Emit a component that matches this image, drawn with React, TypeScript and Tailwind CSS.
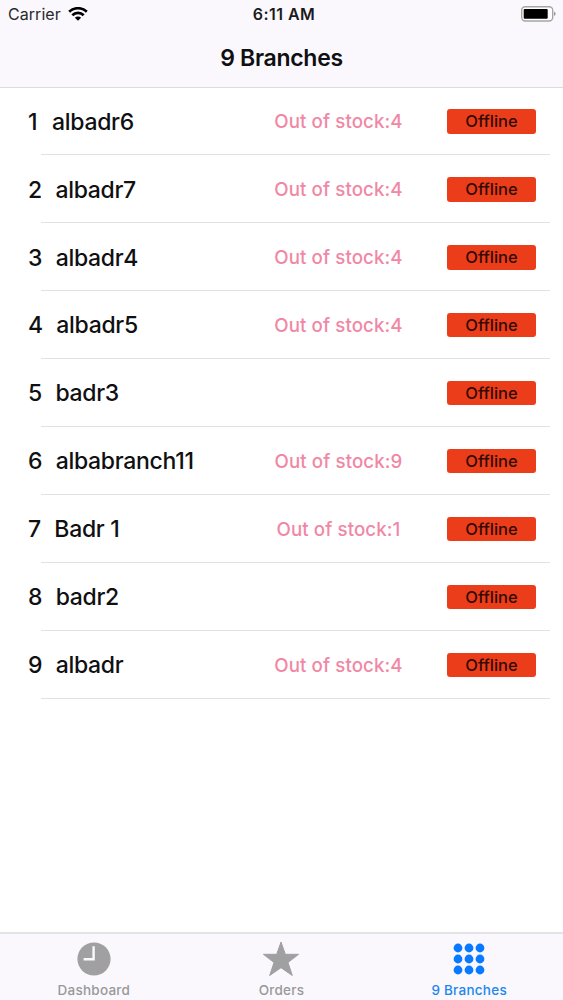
import React from 'react';

interface Branch {
  name: string;
  outOfStock?: number;
}

const branches: Branch[] = [
  { name: 'albadr6', outOfStock: 4 },
  { name: 'albadr7', outOfStock: 4 },
  { name: 'albadr4', outOfStock: 4 },
  { name: 'albadr5', outOfStock: 4 },
  { name: 'badr3' },
  { name: 'albabranch11', outOfStock: 9 },
  { name: 'Badr 1', outOfStock: 1 },
  { name: 'badr2' },
  { name: 'albadr', outOfStock: 4 },
];

const StatusBar: React.FC = () => (
  <div className="grid h-[28px] grid-cols-3 items-center pl-[8px] pr-[7px] text-[16px] leading-[28px]">
    <div className="flex items-center gap-[7px] text-[#29292b]">
      <span className="tracking-[0.05px]">Carrier</span>
      <svg width="20" height="14" viewBox="0 0 20 14" fill="none" stroke="#000" strokeWidth="2.7">
        <path d="M1.2 4.8a12.6 12.6 0 0 1 17.6 0" />
        <path d="M4.3 8.3a8.1 8.1 0 0 1 11.4 0" />
        <path d="M10 13.8 6.9 10.8a4.4 4.4 0 0 1 6.2 0Z" fill="#000" stroke="none" />
      </svg>
    </div>
    <span className="pl-[4px] text-center font-semibold tracking-[0.45px] text-[#1b1b1d]">6:11 AM</span>
    <svg className="justify-self-end" width="36" height="16" viewBox="0 0 36 16">
      <rect x="1.7" y="0.7" width="31" height="14.3" rx="3.5" fill="#fff" stroke="#a5a5a7" strokeWidth="1.4" />
      <rect x="3.7" y="2.9" width="24" height="9.9" rx="1" fill="#000" />
      <path d="M34.2 5.6c1.8.8 1.8 3.7 0 4.5Z" fill="#858587" />
    </svg>
  </div>
);

const BranchRow: React.FC<{ branch: Branch; index: number }> = ({ branch, index }) => (
  <li className="h-[67.95px] pl-[28px] pr-[13px]">
    <div className="flex h-full items-center">
      <div className="flex w-[220px] shrink-0 gap-[13.5px] pt-[0.6px] text-[23px] font-medium leading-[28px] tracking-[-0.3px] text-[#101012]">
        <span className="min-w-[10.5px]">{index}</span>
        <span>{branch.name}</span>
      </div>
      <span className="w-[181px] shrink-0 pt-[1.4px] text-center text-[18.7px] font-medium tracking-[0.1px] text-[#f088a5]">
        {branch.outOfStock !== undefined && `Out of stock:${branch.outOfStock}`}
      </span>
      <span className="ml-[18px] h-[24.5px] w-[89px] shrink-0 rounded-[3px] bg-[#ec3d1b] text-center text-[16.5px] font-medium leading-[24px] text-[#310b04]">
        Offline
      </span>
    </div>
    <div className="ml-[13px] mt-[-1px] h-px bg-[#e2e2e4]" />
  </li>
);

const ClockIcon = () => (
  <svg width="34" height="34" viewBox="0 0 34 34">
    <circle cx="17" cy="17" r="16.6" fill="#a0a0a2" />
    <path d="M16.6 4.2v13.1H6.6" fill="none" stroke="#faf8fc" strokeWidth="2.4" />
  </svg>
);

const StarIcon = () => (
  <svg width="38" height="36" viewBox="0 0 38 36" fill="#a0a0a2">
    <path
      d="m19 1 4.3 12.3h13.3L26 21.5l4.3 13L19 26.7 7.7 34.5l4.3-13L1.4 13.3h13.3Z"
      stroke="#a0a0a2"
      strokeLinejoin="round"
    />
  </svg>
);

const GridIcon = () => (
  <svg width="32" height="32" viewBox="0 0 32 32" fill="#087aff">
    {[5, 16, 27].map((y) =>
      [5, 16, 27].map((x) => <circle key={`${x}-${y}`} cx={x} cy={y} r="4.4" />)
    )}
  </svg>
);

const tabs = [
  { label: 'Dashboard', icon: <ClockIcon />, color: 'text-[#98989a]' },
  { label: 'Orders', icon: <StarIcon />, color: 'text-[#98989a]' },
  { label: '9 Branches', icon: <GridIcon />, color: 'text-[#2187ee]' },
];

const App: React.FC = () => {
  return (
    <div className="flex h-[1000px] w-[563px] flex-col bg-white font-['Inter',sans-serif]">
      <header className="h-[88px] shrink-0 border-b border-[#dcdcde] bg-[#faf8fc]">
        <StatusBar />
        <h1 className="mt-[16px] text-center text-[23px] font-semibold leading-[28px] tracking-[-0.3px] text-[#101012]">
          9 Branches
        </h1>
      </header>

      <ul className="mt-[-0.6px] flex-1">
        {branches.map((branch, i) => (
          <BranchRow key={branch.name} branch={branch} index={i + 1} />
        ))}
      </ul>

      <nav className="grid h-[68px] shrink-0 grid-cols-3 border-t-2 border-[#e3e2e6] bg-[#faf8fc]">
        {tabs.map((tab) => (
          <div key={tab.label} className={`flex flex-col items-center ${tab.color}`}>
            <div className="mt-[6px] flex h-[38px] items-center">{tab.icon}</div>
            <span className="mt-[3px] text-[13.5px] font-medium leading-[18px] tracking-[0.25px]">
              {tab.label}
            </span>
          </div>
        ))}
      </nav>
    </div>
  );
};

export default App;
